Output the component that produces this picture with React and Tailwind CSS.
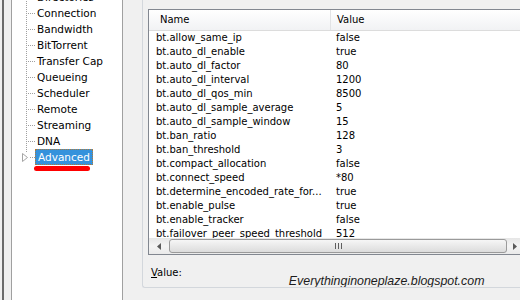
import React from 'react';

const treeItems = ['Directories', 'Connection', 'Bandwidth', 'BitTorrent', 'Transfer Cap', 'Queueing', 'Scheduler', 'Remote', 'Streaming', 'DNA'];

const rows = [
  ['bt.allow_same_ip', 'false'],
  ['bt.auto_dl_enable', 'true'],
  ['bt.auto_dl_factor', '80'],
  ['bt.auto_dl_interval', '1200'],
  ['bt.auto_dl_qos_min', '8500'],
  ['bt.auto_dl_sample_average', '5'],
  ['bt.auto_dl_sample_window', '15'],
  ['bt.ban_ratio', '128'],
  ['bt.ban_threshold', '3'],
  ['bt.compact_allocation', 'false'],
  ['bt.connect_speed', '*80'],
  ['bt.determine_encoded_rate_for...', 'true'],
  ['bt.enable_pulse', 'true'],
  ['bt.enable_tracker', 'false'],
  ['bt.failover_peer_speed_threshold', '512'],
];

// dotted tree connector for one row
const Connector = ({ expander }) => (
  <svg width="23" height="16" className="shrink-0">
    {expander ? (
      <>
        <line x1="14.5" y1="0" x2="14.5" y2="4" stroke="#a0a0a0" strokeDasharray="1 1" />
        <polygon points="10.5,4.5 15.5,8.5 10.5,12.5" fill="#fff" stroke="#a6a6a6" />
        <line x1="18" y1="8.5" x2="23" y2="8.5" stroke="#a0a0a0" strokeDasharray="1 1" />
      </>
    ) : (
      <>
        <line x1="14.5" y1="0" x2="14.5" y2="16" stroke="#a0a0a0" strokeDasharray="1 1" />
        <line x1="16" y1="8.5" x2="23" y2="8.5" stroke="#a0a0a0" strokeDasharray="1 1" />
      </>
    )}
  </svg>
);

const Tree = () => (
  <div className="w-[112px] h-full bg-white border-x border-[#a0a0a0] overflow-hidden text-[10.5px] text-black">
    <div className="mt-[-11px] flex flex-col">
      {treeItems.map(t => (
        <div key={t} className="h-[16px] flex items-center">
          <Connector />
          <span className="pl-[2px] leading-[16px] whitespace-nowrap">{t}</span>
        </div>
      ))}
      <div className="h-[16px] flex items-center">
        <Connector expander />
        <span className="px-[2px] h-[16px] leading-[14px] bg-[#3592dc] text-white border border-dotted border-[#b07a3a] whitespace-nowrap">Advanced</span>
      </div>
      <div className="ml-[22px] mt-[1px] w-[56px] h-[5px] rounded-full bg-[#ff0000]" />
    </div>
  </div>
);

const Scrollbar = () => (
  <div className="h-[17px] flex items-center bg-gradient-to-b from-[#e6e6e6] via-[#f4f4f4] to-[#eaeaea]">
    <div className="w-[20px] h-full flex items-center justify-center shrink-0">
      <svg width="4" height="7"><polygon points="4,0 0,3.5 4,7" fill="#5a5a5a" /></svg>
    </div>
    <div className="w-[338px] h-[14px] shrink-0 rounded-[3px] border border-[#9a9a9a] bg-gradient-to-b from-[#f6f6f6] to-[#dcdcdc] flex items-center justify-center gap-[2px]">
      <div className="w-px h-[6px] bg-[#5e5e5e]" />
      <div className="w-px h-[6px] bg-[#5e5e5e]" />
      <div className="w-px h-[6px] bg-[#5e5e5e]" />
    </div>
    <div className="w-[16px] h-full flex items-center justify-center shrink-0">
      <svg width="4" height="7"><polygon points="0,0 4,3.5 0,7" fill="#5a5a5a" /></svg>
    </div>
  </div>
);

const SettingsList = () => (
  <div className="w-[400px] h-[246px] border border-[#828790] bg-white flex flex-col shrink-0">
    <div className="h-[21px] flex bg-gradient-to-b from-white to-[#f1f2f4] border-b border-[#dcdcdc] shrink-0">
      <div className="w-[182px] pl-[11px] leading-[20px] border-r border-[#e2e3e5]">Name</div>
      <div className="pl-[6px] leading-[20px]">Value</div>
    </div>
    <div className="h-[207px] overflow-hidden shrink-0">
      {rows.map(([name, value]) => (
        <div key={name} className="h-[14px] flex leading-[14px]">
          <div className="w-[182px] pl-[7px] whitespace-nowrap overflow-hidden">{name}</div>
          <div className="pl-[5px]">{value}</div>
        </div>
      ))}
    </div>
    <Scrollbar />
  </div>
);

export default function App() {
  return (
    <div className="w-[520px] h-[300px] bg-[#f0f0f0] flex overflow-hidden font-['DejaVu_Sans',sans-serif] text-[10px] text-black">
      <div className="w-[2px] shrink-0" />
      <div className="w-[2px] bg-[#6b6b6b] shrink-0" />
      <div className="w-[7px] shrink-0" />
      <Tree />
      <div className="flex-1 pl-[19px] overflow-hidden">
        <div className="h-[288px] border-l border-b border-[#d3d7dc] rounded-bl-[3px] pl-[5px] pt-[9px] overflow-hidden">
          <SettingsList />
          <div className="flex items-start">
            <div className="mt-[12px] pl-[3px] leading-[12px]"><span className="underline">V</span>alue:</div>
            <div className="mt-[19px] ml-[107px] leading-[14px] italic text-[12.4px] text-[#1c1c1c] font-['Liberation_Sans',sans-serif] whitespace-nowrap">
              Everythinginoneplaze.blogspot.com
            </div>
          </div>
        </div>
      </div>
    </div>
  );
}
